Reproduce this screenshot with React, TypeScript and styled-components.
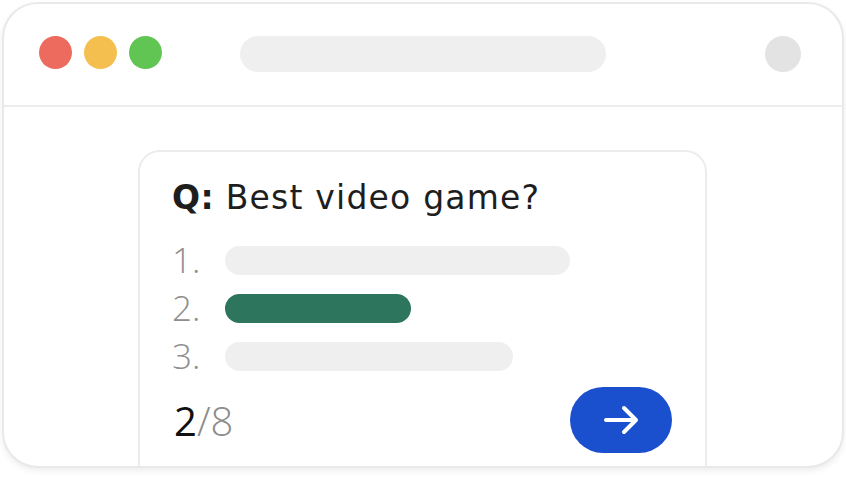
import React from "react";
import styled, { createGlobalStyle } from "styled-components";

const Global = createGlobalStyle`
  html, body { margin: 0; padding: 0; background: #ffffff; }
  body { font-family: "Open Sans", "Liberation Sans", sans-serif; }
  * { box-sizing: border-box; }
`;

const Page = styled.div`
  width: 846px;
  height: 477px;
  padding: 2px 2px 0 2px;
`;

const Window = styled.div`
  width: 842px;
  height: 466px;
  border: 2px solid #e9e9e9;
  border-radius: 36px;
  background: #ffffff;
  box-shadow: 0 3px 6px rgba(0, 0, 0, 0.07);
  overflow: hidden;
  display: flex;
  flex-direction: column;
`;

const Header = styled.div`
  height: 103px;
  flex: none;
  border-bottom: 2px solid #ececec;
  display: flex;
  align-items: flex-start;
  padding: 32px 41px 0 35px;
`;

const Lights = styled.div`
  display: flex;
  gap: 12px;
`;

const Light = styled.span<{ $color: string }>`
  width: 33px;
  height: 33px;
  border-radius: 50%;
  background: ${(p) => p.$color};
`;

const UrlBar = styled.div`
  width: 366px;
  height: 36px;
  border-radius: 18px;
  background: #efefef;
  margin-left: 78px;
`;

const Avatar = styled.div`
  width: 36px;
  height: 36px;
  border-radius: 50%;
  background: #e3e3e3;
  margin-left: auto;
`;

const Body = styled.div`
  flex: 1;
  padding: 43px 0 0 134px;
`;

const Card = styled.div`
  width: 569px;
  height: 360px;
  border: 2px solid #ececec;
  border-radius: 22px;
  padding: 0 33px 0 32px;
  display: flex;
  flex-direction: column;
`;

const Question = styled.div`
  margin-top: 22px;
  height: 48px;
  line-height: 48px;
  font-family: "DejaVu Sans", "Open Sans", sans-serif;
  font-size: 33px;
  letter-spacing: 1.2px;
  color: #1e1e1e;
  white-space: nowrap;
`;

const Bold = styled.span`
  font-weight: 700;
  letter-spacing: 0.4px;
`;

const List = styled.div`
  margin-top: 14px;
  display: flex;
  flex-direction: column;
`;

const Row = styled.div`
  height: 48px;
  display: flex;
  align-items: center;
`;

const Num = styled.span`
  width: 53px;
  font-size: 35px;
  font-weight: 300;
  color: #8e8e8e;
  line-height: 48px;
`;

const Bar = styled.div<{ $w: number; $active?: boolean }>`
  width: ${(p) => p.$w}px;
  height: 29px;
  border-radius: 15px;
  background: ${(p) => (p.$active ? "#2d755d" : "#efefef")};
`;

const Footer = styled.div`
  margin-top: 7px;
  height: 66px;
  display: flex;
  align-items: center;
  justify-content: space-between;
`;

const Counter = styled.div`
  font-size: 40px;
  line-height: 66px;
  color: #111111;
  padding-left: 2px;
  padding-top: 2px;
`;

const Total = styled.span`
  color: #8c8c8c;
  font-weight: 300;
`;

const NextButton = styled.button`
  width: 102px;
  height: 66px;
  border-radius: 33px;
  border: none;
  background: #1a4fcd;
  display: flex;
  align-items: center;
  justify-content: center;
  padding: 0;
  cursor: pointer;
`;

const Arrow = () => (
  <svg width="38" height="32" viewBox="0 0 38 32" fill="none">
    <path
      d="M4 16h30M22 4l12 12-12 12"
      stroke="#ffffff"
      strokeWidth="4"
      strokeLinecap="round"
      strokeLinejoin="round"
    />
  </svg>
);

export default function App() {
  return (
    <Page>
      <Global />
      <Window>
        <Header>
          <Lights>
            <Light $color="#ec6a5e" />
            <Light $color="#f4bf4f" />
            <Light $color="#61c554" />
          </Lights>
          <UrlBar />
          <Avatar />
        </Header>
        <Body>
          <Card>
            <Question>
              <Bold>Q:</Bold> Best video game?
            </Question>
            <List>
              <Row>
                <Num>1.</Num>
                <Bar $w={345} />
              </Row>
              <Row>
                <Num>2.</Num>
                <Bar $w={186} $active />
              </Row>
              <Row>
                <Num>3.</Num>
                <Bar $w={288} />
              </Row>
            </List>
            <Footer>
              <Counter>
                2<Total>/8</Total>
              </Counter>
              <NextButton aria-label="Next">
                <Arrow />
              </NextButton>
            </Footer>
          </Card>
        </Body>
      </Window>
    </Page>
  );
}
